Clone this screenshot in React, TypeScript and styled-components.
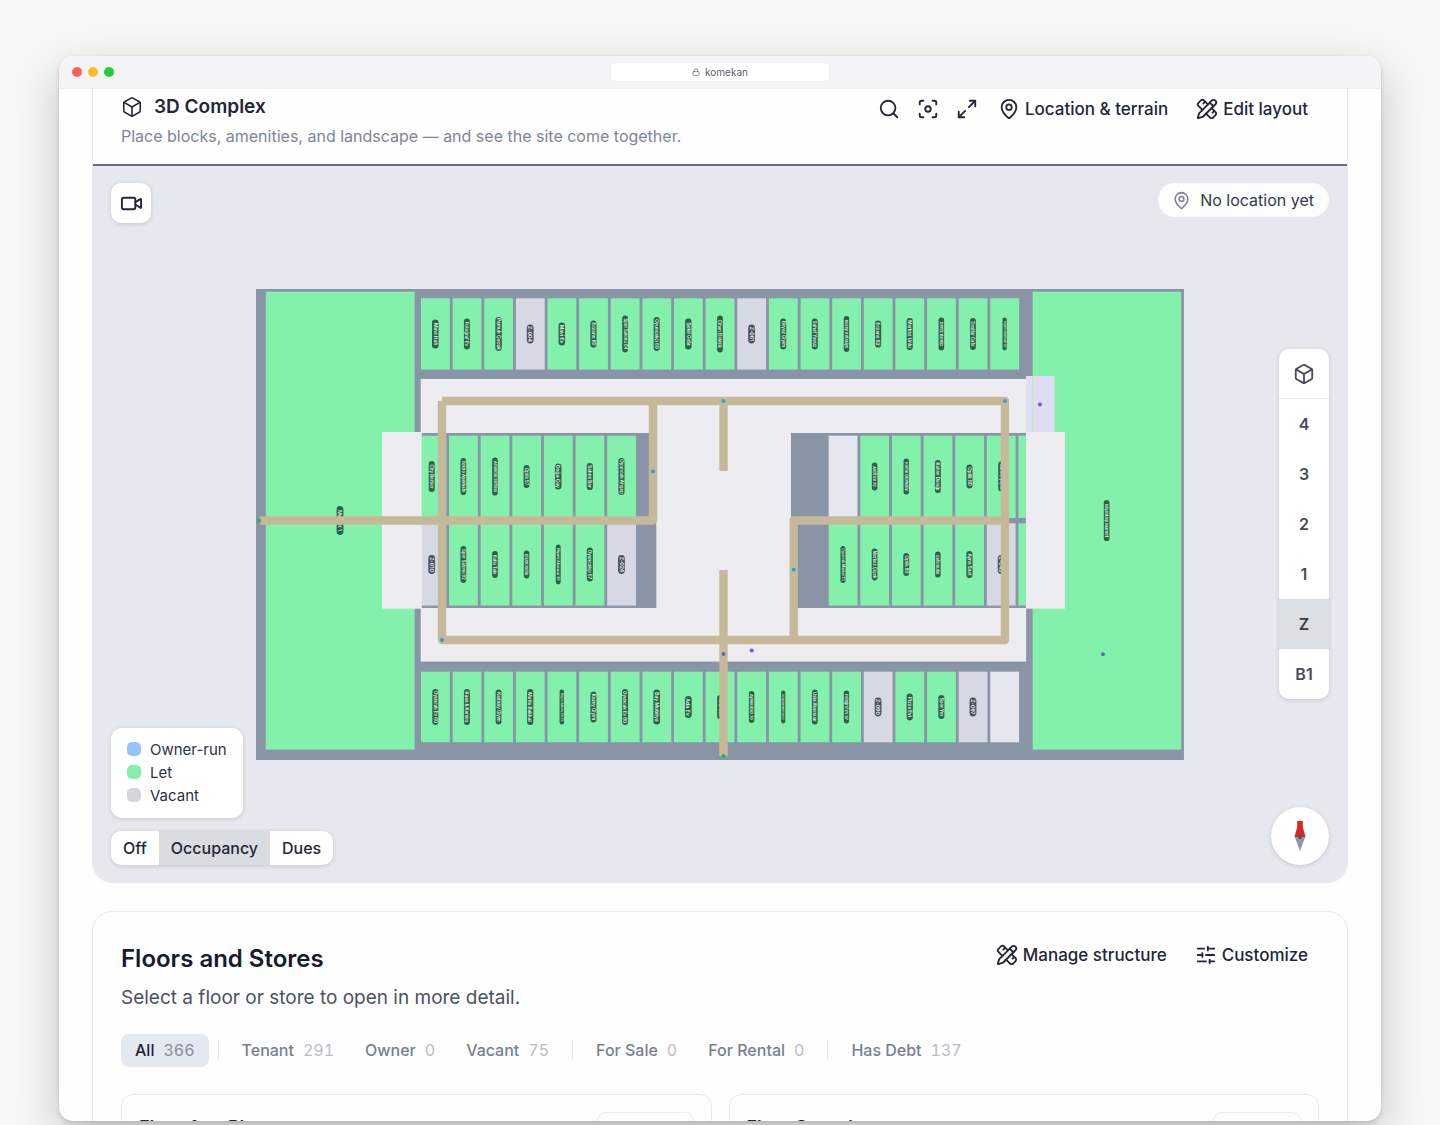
import React from "react";
import styled, { createGlobalStyle } from "styled-components";
import {
  Box,
  Focus,
  Lock,
  MapPin,
  Maximize2,
  PencilRuler,
  Search,
  SlidersHorizontal,
  Video,
} from "lucide-react";

const GlobalStyle = createGlobalStyle`
  *, *::before, *::after { box-sizing: border-box; }
  body {
    margin: 0;
    background: #f6f6f4;
    font-family: Inter, "Liberation Sans", sans-serif;
    color: #232738;
  }
  button { font: inherit; color: inherit; border: 0; background: none; padding: 0; cursor: pointer; }
  h1, h2, h3, p { margin: 0; }
`;

const Page = styled.div`
  height: 100vh;
  padding: 56px 59px 4px;
  overflow: hidden;
`;

const BrowserWindow = styled.div`
  height: 100%;
  display: flex;
  flex-direction: column;
  overflow: hidden;
  border-radius: 14px;
  background: #fefefe;
  box-shadow: 0 0 2px rgba(0, 0, 0, 0.1), 0 3px 4px rgba(0, 0, 0, 0.1), 0 16px 44px rgba(0, 0, 0, 0.2);
`;

const TitleBar = styled.div`
  flex: none;
  display: grid;
  grid-template-columns: 1fr 220px 1fr;
  align-items: center;
  height: 33px;
  padding: 0 13px;
  background: #f3f4f5;
  border-bottom: 1px solid #eff0f1;
`;

const Lights = styled.div`
  display: flex;
  gap: 6px;
`;

const Light = styled.span<{ $color: string }>`
  width: 10px;
  height: 10px;
  border-radius: 50%;
  background: ${(p) => p.$color};
`;

const Address = styled.div`
  display: flex;
  align-items: center;
  justify-content: center;
  gap: 5px;
  height: 20px;
  border-radius: 5px;
  border: 1px solid #ededef;
  background: #fff;
  color: #5a5e70;
  font-size: 10px;
`;

const Content = styled.main`
  padding: 0 33px;
`;

const ComplexCard = styled.section`
  border: solid #e9eaee;
  border-width: 0 1px;
  border-radius: 0 0 20px 20px;
`;

const ComplexHeader = styled.header`
  display: flex;
  justify-content: space-between;
  align-items: flex-start;
  padding: 5px 39px 16px 28px;
  border-bottom: 2px solid #666d80;
`;

const ComplexTitle = styled.h1`
  display: flex;
  align-items: center;
  gap: 11px;
  font-size: 19px;
  line-height: 26px;
  font-weight: 600;
`;

const ComplexNote = styled.p`
  margin-top: 4px;
  font-size: 16px;
  line-height: 24px;
  color: #7e859a;
`;

const Actions = styled.div`
  display: flex;
  align-items: center;
  gap: 28px;
`;

const IconGroup = styled.div`
  display: flex;
  gap: 17px;
  margin-right: -8px;
`;

const Action = styled.button`
  display: flex;
  align-items: center;
  gap: 5px;
  height: 30px;
  font-size: 17px;
  font-weight: 500;
`;

const Canvas = styled.div`
  position: relative;
  padding: 123px 13%;
  background: #e5e8ef;
  border-radius: 0 0 20px 20px;
`;

const Plan = styled.svg`
  display: block;
  width: 100%;
  height: auto;
`;

const Floating = styled.div`
  position: absolute;
  background: #fff;
  box-shadow: 0 1px 4px rgba(30, 34, 51, 0.16);
`;

const CameraButton = styled(Floating).attrs({ as: "button", "aria-label": "Camera" })`
  top: 17px;
  left: 18px;
  display: grid;
  place-items: center;
  width: 40px;
  height: 40px;
  border-radius: 10px;
  background: #fff;
`;

const LocationPill = styled.div`
  position: absolute;
  top: 17px;
  right: 18px;
  display: flex;
  align-items: center;
  gap: 9px;
  height: 34px;
  padding: 0 15px 0 14px;
  border-radius: 17px;
  background: #fbfcfe;
  color: #353948;
  font-size: 16px;
  svg { color: #7e859a; }
`;

const FloorRail = styled(Floating)`
  top: 50%;
  right: 18px;
  transform: translateY(-50%);
  width: 50px;
  overflow: hidden;
  border-radius: 10px;
`;

const FloorButton = styled.button<{ $active?: boolean; $divided?: boolean }>`
  display: grid;
  place-items: center;
  width: 100%;
  height: 50px;
  font-size: 16px;
  font-weight: 600;
  color: ${(p) => (p.$active ? "#353a48" : "#474c5c")};
  background: ${(p) => (p.$active ? "#dcdfe1" : "transparent")};
  border-bottom: ${(p) => (p.$divided ? "1px solid #e6e8ec" : "0")};
`;

const BottomLeft = styled.div`
  position: absolute;
  left: 18px;
  bottom: 18px;
  display: flex;
  flex-direction: column;
  align-items: flex-start;
  gap: 13px;
`;

const Legend = styled.ul`
  margin: 0;
  padding: 10px 16px 11px;
  list-style: none;
  border-radius: 11px;
  background: #fff;
  box-shadow: 0 1px 4px rgba(30, 34, 51, 0.16);
`;

const LegendItem = styled.li<{ $color: string }>`
  display: flex;
  align-items: center;
  gap: 9px;
  font-size: 15px;
  line-height: 23px;
  color: #2d3142;
  &::before {
    content: "";
    width: 14px;
    height: 14px;
    border-radius: 5px;
    background: ${(p) => p.$color};
  }
`;

const Segmented = styled.div`
  display: flex;
  overflow: hidden;
  border-radius: 10px;
  background: #fff;
  box-shadow: 0 1px 4px rgba(30, 34, 51, 0.16);
`;

const Segment = styled.button<{ $active?: boolean }>`
  height: 34px;
  padding: 0 12px;
  font-size: 16px;
  font-weight: 500;
  background: ${(p) => (p.$active ? "#d9dce1" : "transparent")};
`;

const Compass = styled(Floating)`
  right: 18px;
  bottom: 18px;
  display: grid;
  place-items: center;
  width: 58px;
  height: 58px;
  border-radius: 50%;
`;

const StoresCard = styled.section`
  margin-top: 28px;
  padding: 28px;
  border: 1px solid #e9eaee;
  border-radius: 20px;
`;

const StoresHeader = styled.header`
  display: flex;
  justify-content: space-between;
  align-items: flex-start;
  padding-right: 11px;
`;

const StoresTitle = styled.h2`
  font-size: 24px;
  line-height: 38px;
  font-weight: 600;
  color: #171b2e;
`;

const StoresNote = styled.p`
  margin-top: 6px;
  font-size: 19px;
  line-height: 28px;
  color: #4c5263;
`;

const Tabs = styled.div`
  display: flex;
  align-items: center;
  gap: 3px;
  margin-top: 22px;
`;

const Tab = styled.button<{ $active?: boolean }>`
  display: flex;
  align-items: center;
  gap: 9px;
  height: 33px;
  padding: 0 14px;
  border-radius: 8px;
  font-size: 16px;
  font-weight: 500;
  color: ${(p) => (p.$active ? "#1e2233" : "#787f94")};
  background: ${(p) => (p.$active ? "#e4e8f0" : "transparent")};
`;

const Count = styled.span<{ $active?: boolean }>`
  font-weight: 400;
  font-variant-numeric: tabular-nums;
  color: ${(p) => (p.$active ? "#888e9c" : "#b9bcc4")};
`;

const Divider = styled.span`
  width: 1px;
  height: 20px;
  margin: 0 6px;
  background: #e6e8ec;
`;

const FloorGrid = styled.div`
  display: grid;
  grid-template-columns: 1fr 1fr;
  gap: 17px;
  margin-top: 27px;
`;

const FloorCard = styled.article`
  display: flex;
  justify-content: space-between;
  align-items: flex-start;
  height: 120px;
  padding: 17px;
  border: 1px solid #e9eaee;
  border-radius: 12px;
`;

const FloorName = styled.h3`
  font-size: 18px;
  line-height: 32px;
  font-weight: 600;
`;

const CardButton = styled.button<{ $wide?: boolean }>`
  width: ${(p) => (p.$wide ? 97 : 88)}px;
  height: 36px;
  border: 1px solid #e9eaee;
  border-radius: 9px;
  font-size: 15px;
  font-weight: 500;
`;

const PlanText = styled.text`
  font-weight: 600;
  fill: #e6eeea;
  text-anchor: middle;
`;

type Kind = "let" | "vacant" | "empty";
type Unit = [name: string, length: number, kind?: Kind];

const FILL: Record<Kind, string> = { let: "#83f0ac", vacant: "#d6d9e3", empty: "#e5e6ef" };
const PITCH = 31.63;

const topRow: Unit[] = [
  ["Mavi Halı", 29], ["Fotoğraf Ev", 31], ["Pamuk Çocuk", 34], ["Z-004", 19, "vacant"],
  ["Mavi Ev", 23], ["Eczane 60", 27], ["Spor Salonu 64", 37], ["Oyuncakçı 69", 34],
  ["Şekil Gıda", 31], ["Cihan Elektrik", 37], ["Z-061", 19, "vacant"], ["Beyaz Giyim", 31],
  ["Sahaf Yavuz", 31], ["Kuzey Kırtasiye", 36], ["Eczane 82", 27], ["Merkez Unlu", 32],
  ["Deniz Balıkçı", 33], ["Dostlar Cafe", 32], ["Nişantı Aksesuar 60", 33],
];
const bottomRow: Unit[] = [
  ["Oyuncak Ev 60", 36], ["Kaan & Kardeş", 36], ["Kadıköy Giyim", 35], ["Mutlu Bakkal", 36],
  ["Düğün Salonu Evi 72", 35], ["Kuzey Giyim", 31], ["Oyuncak Ev 80", 36], ["Bay Mobilya", 35],
  ["Ada Ev", 22], ["Terzi Can", 24], ["Ayakkabıcı 70", 32], ["Kırtasiye Mert Ev 33", 33],
  ["Usta Aksesuar", 35], ["Fotoğraf Ev 97", 33], ["Z-090", 19, "vacant"], ["Pizza Evi", 27],
  ["Spor Yer", 24], ["Z-097", 19, "vacant"], ["", 0, "empty"],
];
const westUpper: Unit[] = [
  ["City Berber", 31], ["Tekno Ayakkabı", 37], ["Anadolu Sofrası", 38], ["Optik 57", 23],
  ["Doğa Çay", 26], ["Sahne Bar", 27], ["Oyuncak Ahşap", 37],
];
const westLower: Unit[] = [
  ["Z-010", 19, "vacant"], ["Spor Salonu 92", 37], ["Kutlu Takı", 27], ["Çiçek Kutlu", 28],
  ["Nişantı Aksesuar 60", 40], ["Oyuncakçı 57", 34], ["Z-024", 19, "vacant"],
];
const eastUpper: Unit[] = [
  ["", 0, "empty"], ["Aktif Ev 75", 28], ["Kartal Otomotiv", 36], ["Kahve Durağı", 33],
  ["Optik 80", 24], ["Güneş Çiçek", 30], ["", 0],
];
const eastLower: Unit[] = [
  ["Oyuncak Market 70", 37], ["Merkez Çiçek", 32], ["Optik 80", 23], ["Cafe Butik", 26],
  ["Ayna Saat", 27], ["Z-045", 19, "vacant"], ["", 0],
];

type LabelProps = { x: number; y: number; name: string; length: number; dark?: boolean };

// The type size follows from the room that the name has in its pill.
const Label = ({ x, y, name, length, dark }: LabelProps) => {
  const size = Math.min(5.2, (length - 3) / (name.length * 0.58));
  const thickness = size + 1.6;
  return (
    <g transform={`translate(${x} ${y}) rotate(90)`}>
      <rect
        x={-length / 2}
        y={-thickness / 2}
        width={length}
        height={thickness}
        rx={thickness / 2}
        fill={dark ? "#4b5060" : "#2c6346"}
      />
      <PlanText y={size * 0.36} fontSize={size}>{name}</PlanText>
    </g>
  );
};

const Row = ({ units, x, y, height, labelY }: { units: Unit[]; x: number; y: number; height: number; labelY: number }) => (
  <g>
    {units.map(([name, length, kind = "let"], i) => {
      const left = x + i * PITCH;
      return (
        <g key={i}>
          <rect x={left} y={y} width={28.8} height={height} fill={FILL[kind]} />
          {name && <Label x={left + 14.3} y={labelY} name={name} length={length} dark={kind === "vacant"} />}
        </g>
      );
    })}
  </g>
);

const PATHS = [
  "M186 112H749V351H186V112",
  "M397 112V231.5H4",
  "M467.5 112V182",
  "M467.5 281V467",
  "M749 231.5H537.7V351",
];
const DOTS: [number, number, string][] = [
  [467.5, 112, "#2f9fd0"], [749, 112, "#2f9fd0"], [397, 182.5, "#2f9fd0"], [186, 351, "#2f9fd0"],
  [537.7, 280.7, "#2f9fd0"], [784, 115.5, "#6b5bd6"], [467.5, 365, "#6b5bd6"], [495.7, 361.5, "#6b5bd6"],
  [847, 365.2, "#4f6fc8"], [3, 231.5, "#22b455"], [467.5, 467, "#22b455"],
];

const FloorPlan = () => (
  <Plan viewBox="0 0 928 471" role="img" aria-label="Floor plan, ground floor">
    <rect width="928" height="471" fill="#8a94a7" />
    <rect x="9.7" y="2.7" width="149" height="458" fill="#83f0ac" />
    <rect x="776.7" y="2.7" width="148.6" height="458" fill="#83f0ac" />
    <Row units={topRow} x={165} y={9.3} height={71.3} labelY={45} />
    <Row units={bottomRow} x={165} y={382.7} height={70.6} labelY={418} />
    <rect x="164.7" y="90" width="605.5" height="282.6" fill="#edecf1" />
    <rect x="165.7" y="144" width="234.6" height="175" fill="#8a94a7" />
    <rect x="535" y="144" width="235" height="175" fill="#8a94a7" />
    <Row units={westUpper} x={161.4} y={146.7} height={82.3} labelY={187.5} />
    <Row units={westLower} x={161.4} y={234.3} height={82.3} labelY={275.5} />
    <Row units={eastUpper} x={572.7} y={146.7} height={82.3} labelY={187.5} />
    <Row units={eastLower} x={572.7} y={234.3} height={82.3} labelY={275.5} />
    <rect x="126" y="143" width="39.6" height="176.7" fill="#edecf1" />
    <rect x="770" y="87" width="28.7" height="56" fill="#e0dcf1" />
    <rect x="776.4" y="87" width="1.2" height="56" fill="#bfe6cf" />
    <rect x="770" y="143" width="39" height="176.7" fill="#edecf1" />
    <Label x={84} y={231.5} name="Market 1" length={29} />
    <Label x={850.7} y={231.5} name="Nişantaşı Market" length={41} />
    {PATHS.map((d) => (
      <path key={d} d={d} fill="none" stroke="#c6b999" strokeWidth="8.4" strokeLinejoin="round" />
    ))}
    {DOTS.map(([x, y, color]) => (
      <circle key={`${x}-${y}`} cx={x} cy={y} r="2" fill={color} />
    ))}
  </Plan>
);

const floors = ["4", "3", "2", "1", "Z", "B1"];
const tabGroups: [string, number][][] = [
  [["All", 366]],
  [["Tenant", 291], ["Owner", 0], ["Vacant", 75]],
  [["For Sale", 0], ["For Rental", 0]],
  [["Has Debt", 137]],
];

export default function App() {
  return (
    <>
      <GlobalStyle />
      <Page>
        <BrowserWindow>
          <TitleBar>
            <Lights>
              <Light $color="#fe5f57" />
              <Light $color="#febc2e" />
              <Light $color="#28c840" />
            </Lights>
            <Address>
              <Lock size={8} />
              komekan
            </Address>
          </TitleBar>
          <Content>
            <ComplexCard>
              <ComplexHeader>
                <div>
                  <ComplexTitle>
                    <Box size={22} strokeWidth={1.75} />
                    3D Complex
                  </ComplexTitle>
                  <ComplexNote>Place blocks, amenities, and landscape — and see the site come together.</ComplexNote>
                </div>
                <Actions>
                  <IconGroup>
                    <Action aria-label="Search"><Search size={22} /></Action>
                    <Action aria-label="Focus"><Focus size={22} /></Action>
                    <Action aria-label="Full screen"><Maximize2 size={22} /></Action>
                  </IconGroup>
                  <Action><MapPin size={22} />Location &amp; terrain</Action>
                  <Action><PencilRuler size={22} />Edit layout</Action>
                </Actions>
              </ComplexHeader>
              <Canvas>
                <FloorPlan />
                <CameraButton>
                  <Video size={23} />
                </CameraButton>
                <LocationPill>
                  <MapPin size={19} />
                  No location yet
                </LocationPill>
                <FloorRail>
                  <FloorButton $divided aria-label="Whole complex"><Box size={22} /></FloorButton>
                  {floors.map((f) => (
                    <FloorButton key={f} $active={f === "Z"}>{f}</FloorButton>
                  ))}
                </FloorRail>
                <BottomLeft>
                  <Legend>
                    <LegendItem $color="#93c5fd">Owner-run</LegendItem>
                    <LegendItem $color="#83f0ac">Let</LegendItem>
                    <LegendItem $color="#d3d5d9">Vacant</LegendItem>
                  </Legend>
                  <Segmented>
                    <Segment>Off</Segment>
                    <Segment $active>Occupancy</Segment>
                    <Segment>Dues</Segment>
                  </Segmented>
                </BottomLeft>
                <Compass>
                  <svg width="12" height="30" viewBox="0 0 12 30" aria-label="North">
                    <path d="M3.2 0H8.8V6L11.6 16H0.4L3.2 6Z" fill="#dc2626" />
                    <path d="M0.8 16H11.2L6 30Z" fill="#8f97a8" />
                    <circle cx="6" cy="16" r="2" fill="#4b5263" />
                  </svg>
                </Compass>
              </Canvas>
            </ComplexCard>
            <StoresCard>
              <StoresHeader>
                <div>
                  <StoresTitle>Floors and Stores</StoresTitle>
                  <StoresNote>Select a floor or store to open in more detail.</StoresNote>
                </div>
                <Actions>
                  <Action><PencilRuler size={22} />Manage structure</Action>
                  <Action><SlidersHorizontal size={22} />Customize</Action>
                </Actions>
              </StoresHeader>
              <Tabs>
                {tabGroups.map((group, g) => (
                  <React.Fragment key={g}>
                    {g > 0 && <Divider />}
                    {group.map(([name, count]) => (
                      <Tab key={name} $active={g === 0}>
                        {name}
                        <Count $active={g === 0}>{count}</Count>
                      </Tab>
                    ))}
                  </React.Fragment>
                ))}
              </Tabs>
              <FloorGrid>
                <FloorCard>
                  <FloorName>Floor App Plan</FloorName>
                  <CardButton $wide>Open</CardButton>
                </FloorCard>
                <FloorCard>
                  <FloorName>Floor Stored</FloorName>
                  <CardButton>Open</CardButton>
                </FloorCard>
              </FloorGrid>
            </StoresCard>
          </Content>
        </BrowserWindow>
      </Page>
    </>
  );
}
